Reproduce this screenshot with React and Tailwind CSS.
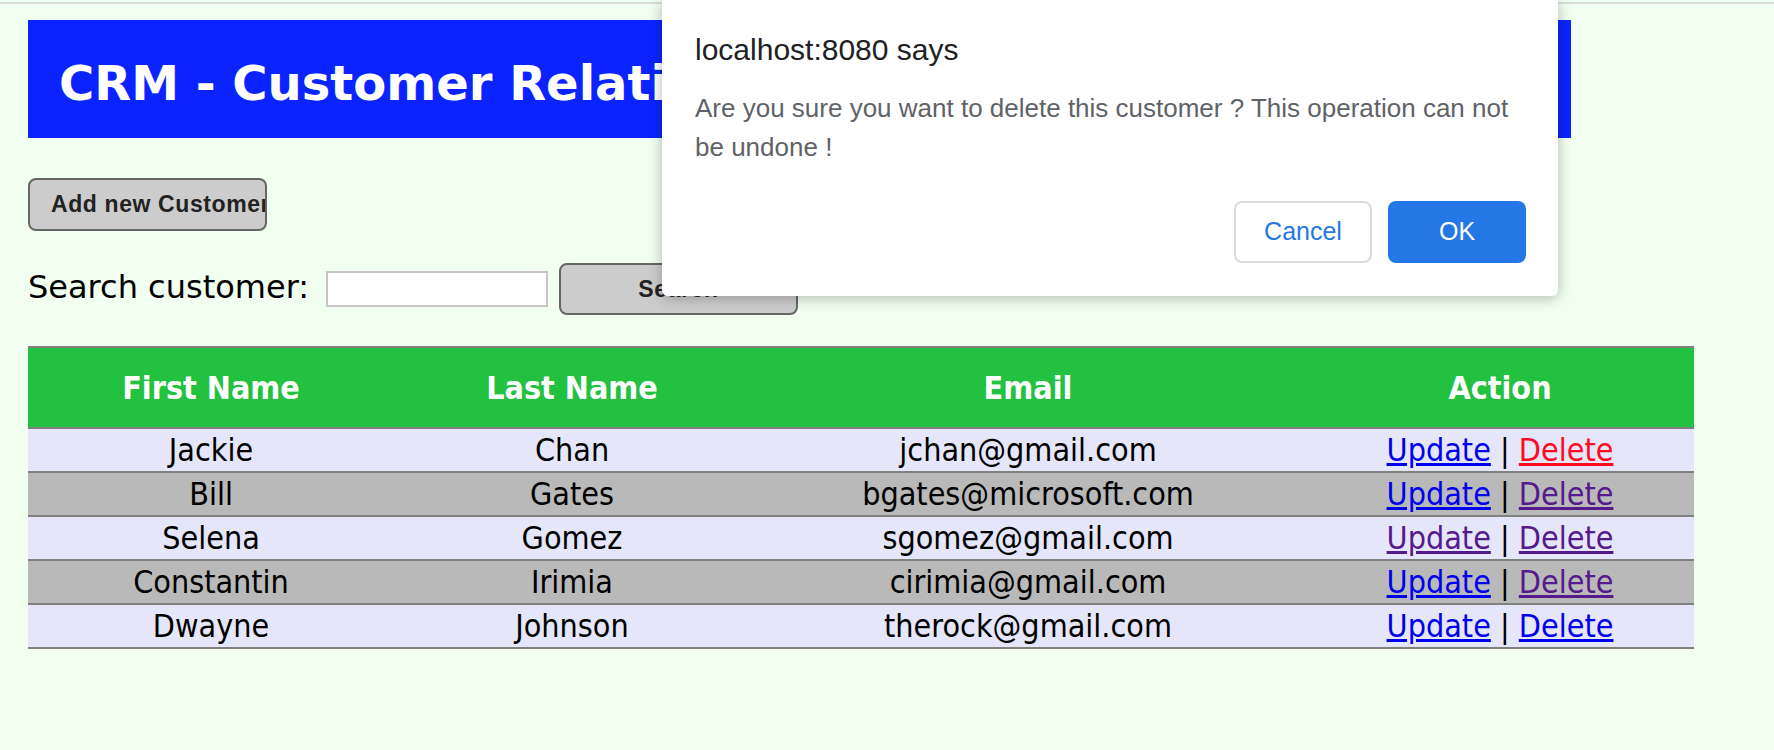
const customers = [
  { first: 'Jackie', last: 'Chan', email: 'jchan@gmail.com', update: 'text-[#0000ee]', del: 'text-[#ff0a1e]' },
  { first: 'Bill', last: 'Gates', email: 'bgates@microsoft.com', update: 'text-[#0000ee]', del: 'text-[#551a8b]' },
  { first: 'Selena', last: 'Gomez', email: 'sgomez@gmail.com', update: 'text-[#551a8b]', del: 'text-[#551a8b]' },
  { first: 'Constantin', last: 'Irimia', email: 'cirimia@gmail.com', update: 'text-[#0000ee]', del: 'text-[#551a8b]' },
  { first: 'Dwayne', last: 'Johnson', email: 'therock@gmail.com', update: 'text-[#0000ee]', del: 'text-[#0000ee]' },
];

export default function App() {
  return (
    <div className="relative h-[750px] overflow-hidden bg-[#f0fff0] pt-[2px]">
      <div className="h-[2px] bg-[#dcdcdc]"></div>

      <div className="px-[28px]">
        {/* Header */}
        <div className="mt-[16px] h-[118px] w-[1543px] bg-[#0b24ff] pl-[31px] pt-[34px]">
          <h1 className="whitespace-nowrap font-['DejaVu_Sans',Verdana,sans-serif] text-[48px] font-bold leading-[58px] text-white">
            CRM - Customer Relationship Manager
          </h1>
        </div>

        {/* Add button */}
        <button className="mt-[40px] block h-[53px] w-[239px] overflow-hidden whitespace-nowrap rounded-[8px] border-2 border-[#666666] bg-[#cccccc] pl-[21px] text-left font-['Liberation_Sans',Arial,sans-serif] text-[23px] font-bold tracking-[0.6px] text-[#222222]">
          Add new Customer
        </button>

        {/* Search */}
        <div className="mt-[32px] flex items-center">
          <span className="mb-[4px] font-['DejaVu_Sans',Verdana,sans-serif] text-[32px] text-black">Search customer:</span>
          <input className="ml-[17px] h-[36px] w-[222px] border-2 border-[#c8c4c8] bg-white" />
          <button className="ml-[11px] h-[52px] w-[239px] rounded-[8px] border-2 border-[#666666] bg-[#cccccc] font-['Liberation_Sans',Arial,sans-serif] text-[23px] font-bold tracking-[0.6px] text-[#222222]">
            Search
          </button>
        </div>

        {/* Table */}
        <table className="mt-[31px] w-[1666px] border-separate border-spacing-0 font-['DejaVu_Sans_Condensed','DejaVu_Sans',Tahoma,sans-serif] text-[32px]">
          <thead>
            <tr className="bg-[#22c13f] text-white">
              <th className="h-[83px] w-[366px] border-y-2 border-[#808080] p-0 font-bold">First Name</th>
              <th className="h-[83px] w-[356px] border-y-2 border-[#808080] p-0 font-bold">Last Name</th>
              <th className="h-[83px] w-[556px] border-y-2 border-[#808080] p-0 font-bold">Email</th>
              <th className="h-[83px] w-[388px] border-y-2 border-[#808080] p-0 font-bold">Action</th>
            </tr>
          </thead>
          <tbody>
            {customers.map((c, i) => (
              <tr key={c.email} className={i % 2 === 0 ? 'bg-[#e6e6fa]' : 'bg-[#b9b9b9]'}>
                <td className="h-[44px] border-b-2 border-[#808080] p-0 text-center leading-[42px] text-black">{c.first}</td>
                <td className="h-[44px] border-b-2 border-[#808080] p-0 text-center leading-[42px] text-black">{c.last}</td>
                <td className="h-[44px] border-b-2 border-[#808080] p-0 text-center leading-[42px] text-black">{c.email}</td>
                <td className="h-[44px] border-b-2 border-[#808080] p-0 text-center leading-[42px] text-black">
                  <a href="#" className={`${c.update} underline`}>Update</a>
                  {' | '}
                  <a href="#" className={`${c.del} underline`}>Delete</a>
                </td>
              </tr>
            ))}
          </tbody>
        </table>
      </div>

      {/* Confirm dialog */}
      <div className="absolute left-[662px] top-0 w-[896px] rounded-b-[6px] bg-white pb-[33px] pl-[33px] pr-[32px] pt-[33px] font-['Liberation_Sans',Arial,sans-serif] shadow-[0_2px_14px_rgba(0,0,0,0.28)]">
        <div className="text-[30px] leading-[34px] text-[#202124]">localhost:8080 says</div>
        <p className="mt-[22px] text-[26px] leading-[39px] text-[#5f6368]">
          Are you sure you want to delete this customer ? This operation can not be undone !
        </p>
        <div className="mt-[34px] flex justify-end gap-[16px]">
          <button className="h-[62px] w-[138px] rounded-[8px] border-2 border-[#dadce0] bg-white text-[25px] text-[#2477e4]">Cancel</button>
          <button className="h-[62px] w-[138px] rounded-[8px] bg-[#2477e4] text-[25px] text-white">OK</button>
        </div>
      </div>
    </div>
  );
}
